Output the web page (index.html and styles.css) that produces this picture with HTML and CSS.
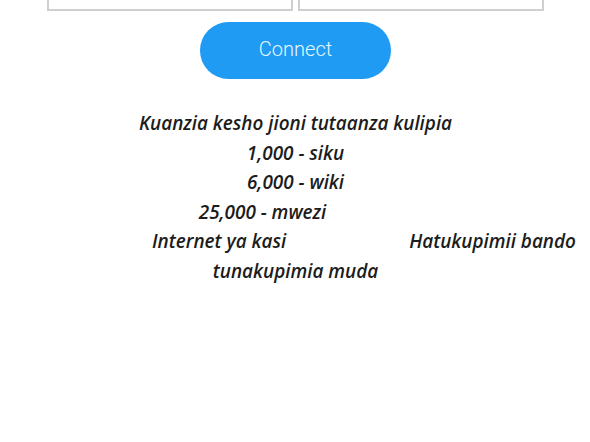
FILE: index.html
```html
<!DOCTYPE html>
<html lang="sw">
<head>
<meta charset="utf-8">
<title>Connect</title>
<link rel="stylesheet" href="styles.css">
</head>
<body>
<div class="page">
  <div class="fields">
    <div class="field"></div>
    <div class="field"></div>
  </div>
  <div class="actions">
    <button class="connect" type="button">Connect</button>
  </div>
  <div class="notice">
    <div class="line">Kuanzia kesho jioni tutaanza kulipia</div>
    <div class="line">1,000 - siku</div>
    <div class="line">6,000 - wiki</div>
    <div class="line line-shift">25,000 - mwezi</div>
    <div class="line line-split"><span>Internet ya kasi</span><span>Hatukupimii bando</span></div>
    <div class="line">tunakupimia muda</div>
  </div>
</div>
</body>
</html>
```
FILE: styles.css
```css
html, body {
  margin: 0;
  padding: 0;
  background: #ffffff;
}
.page {
  width: 590px;
  height: 442px;
  overflow: hidden;
}
.fields {
  display: flex;
  gap: 5px;
  padding-left: 47px;
  margin-top: -40px;
}
.field {
  width: 246px;
  height: 51px;
  box-sizing: border-box;
  border: 2px solid #cfcfcf;
  background: #fff;
}
.actions {
  display: flex;
  justify-content: center;
  padding-top: 11px;
  padding-left: 1px;
}
.connect {
  width: 191px;
  height: 57px;
  border: none;
  border-radius: 29px;
  background: #1f9bf3;
  color: #e6f8ff;
  font-family: Roboto, "Liberation Sans", sans-serif;
  font-weight: 300;
  font-size: 20px;
  padding: 0;
  padding-bottom: 3px;
}
.notice {
  margin-top: 30px;
  font-family: "Open Sans", "Liberation Sans", sans-serif;
  font-style: italic;
  font-weight: 600;
  font-size: 18.9px;
  color: #1c1c1c;
}
.line {
  height: 29.5px;
  line-height: 29.5px;
  text-align: center;
  padding-left: 1px;
  white-space: nowrap;
}
.line-shift {
  padding-right: 66px;
}
.line-split {
  display: flex;
  text-align: left;
  padding-left: 152px;
  gap: 123px;
}
```
